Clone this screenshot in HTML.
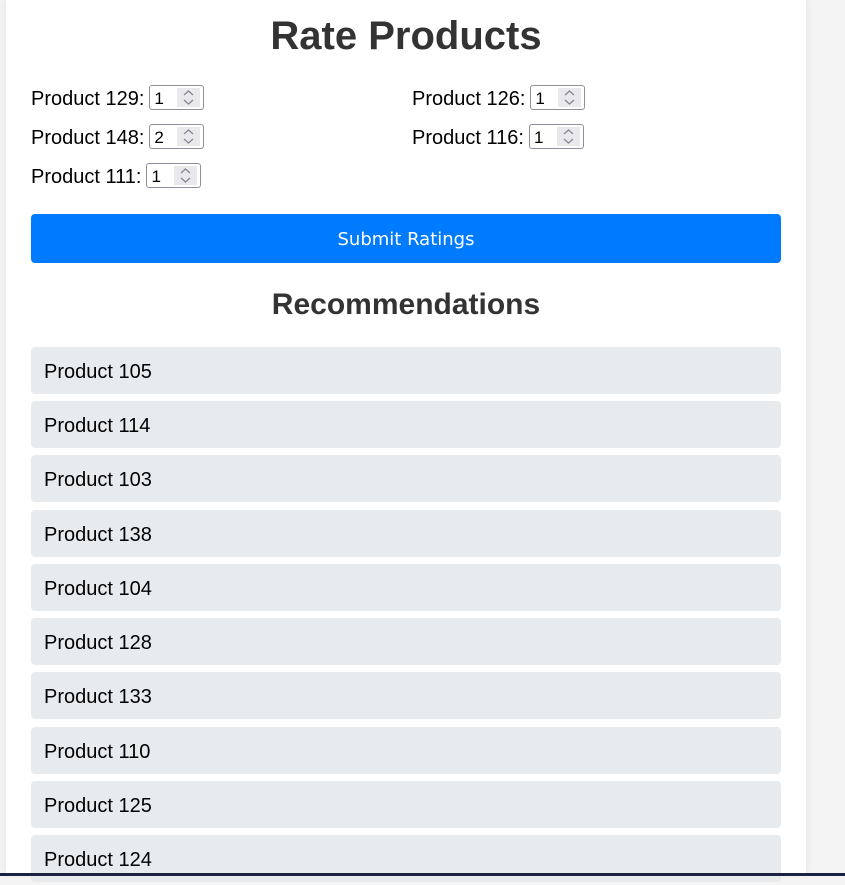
<!DOCTYPE html>
<html><head><style>
html,body{margin:0;padding:0;}
body{width:845px;height:876px;overflow:hidden;background:#f4f4f4;font-family:"Liberation Sans",Arial,sans-serif;position:relative;}
.c{position:absolute;left:6px;top:0;width:800px;height:873px;background:#fff;box-shadow:0 0 8px rgba(0,0,0,0.08);}
h1{position:absolute;left:0;width:800px;top:13px;margin:0;text-align:center;font-size:40px;line-height:46px;color:#333;font-weight:bold;}
.lab{position:absolute;font-size:20px;color:#000;line-height:24px;}
.inp{display:inline-block;vertical-align:middle;width:53px;height:23px;border:1px solid #8f8f9d;border-radius:3px;position:relative;margin-left:5px;top:-2px;background:#fff;}
.inp span{position:absolute;left:4px;top:2px;font-size:17px;line-height:21px;}
.inp i{position:absolute;right:3px;top:2px;width:23px;height:19px;background:#e9e9ed;}
.inp i svg{position:absolute;left:6px;top:2px;}
.btn{position:absolute;left:25px;top:214px;width:750px;height:49px;background:#007bff;border-radius:4px;color:#fff;text-align:center;line-height:52px;font-family:"DejaVu Sans",sans-serif;font-size:18px;}
h2{position:absolute;left:0;width:800px;top:288px;margin:0;text-align:center;font-size:30px;line-height:34px;color:#333;}
.it{position:absolute;left:25px;width:737px;height:47px;padding-left:13px;background:#e8ebee;border-radius:4px;font-size:20px;line-height:50px;color:#000;}
.bar{position:absolute;left:0;top:873px;width:845px;height:3px;background:#1b2243;}
</style></head><body>
<div class="c">
<h1>Rate Products</h1>
<div class="lab" style="left:25px;top:87px">Product 129:<span class="inp"><span>1</span><i><svg width="11" height="15" viewBox="0 0 11 15"><path d="M1 5L5.5 1L10 5M1 10L5.5 14L10 10" fill="none" stroke="#888" stroke-width="1.3"/></svg></i></span></div>
<div class="lab" style="left:406px;top:87px">Product 126:<span class="inp"><span>1</span><i><svg width="11" height="15" viewBox="0 0 11 15"><path d="M1 5L5.5 1L10 5M1 10L5.5 14L10 10" fill="none" stroke="#888" stroke-width="1.3"/></svg></i></span></div>
<div class="lab" style="left:25px;top:126px">Product 148:<span class="inp"><span>2</span><i><svg width="11" height="15" viewBox="0 0 11 15"><path d="M1 5L5.5 1L10 5M1 10L5.5 14L10 10" fill="none" stroke="#888" stroke-width="1.3"/></svg></i></span></div>
<div class="lab" style="left:406px;top:126px">Product 116:<span class="inp"><span>1</span><i><svg width="11" height="15" viewBox="0 0 11 15"><path d="M1 5L5.5 1L10 5M1 10L5.5 14L10 10" fill="none" stroke="#888" stroke-width="1.3"/></svg></i></span></div>
<div class="lab" style="left:25px;top:165px">Product 111:<span class="inp"><span>1</span><i><svg width="11" height="15" viewBox="0 0 11 15"><path d="M1 5L5.5 1L10 5M1 10L5.5 14L10 10" fill="none" stroke="#888" stroke-width="1.3"/></svg></i></span></div>
<div class="btn">Submit Ratings</div>
<h2>Recommendations</h2>
<div class="it" style="top:347px">Product 105</div>
<div class="it" style="top:401px">Product 114</div>
<div class="it" style="top:455px">Product 103</div>
<div class="it" style="top:510px">Product 138</div>
<div class="it" style="top:564px">Product 104</div>
<div class="it" style="top:618px">Product 128</div>
<div class="it" style="top:672px">Product 133</div>
<div class="it" style="top:727px">Product 110</div>
<div class="it" style="top:781px">Product 125</div>
<div class="it" style="top:835px">Product 124</div>
</div>
<div class="bar"></div>
</body></html>
